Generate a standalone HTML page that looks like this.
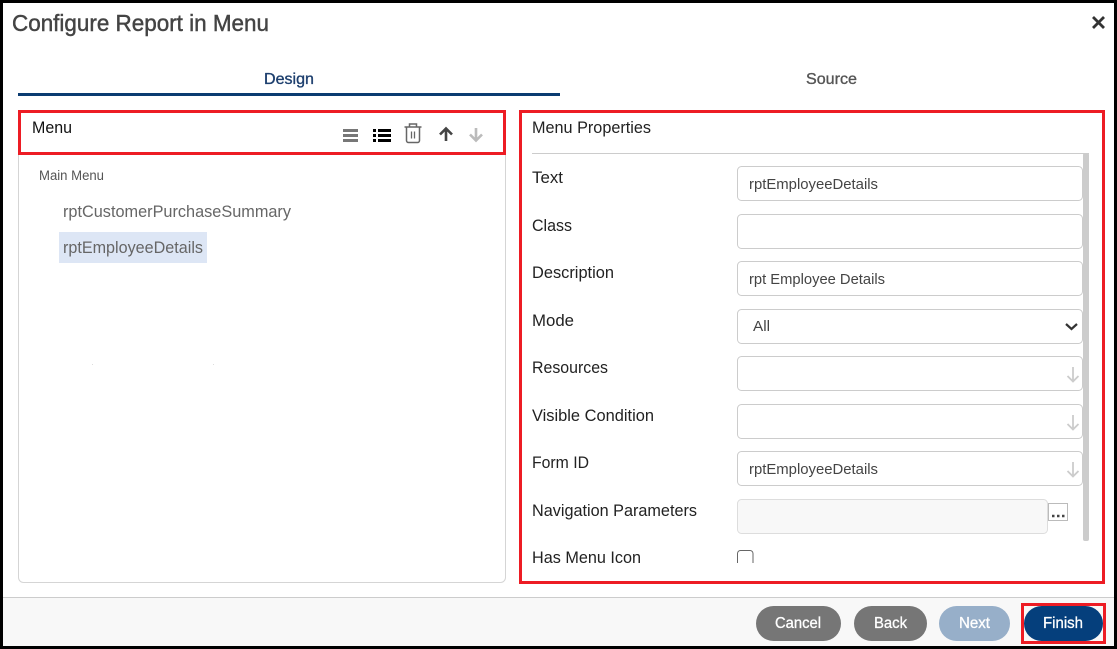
<!DOCTYPE html>
<html>
<head>
<meta charset="utf-8">
<title>Configure Report in Menu</title>
<style>
html,body{margin:0;padding:0;background:#000;width:1117px;height:649px;overflow:hidden}
svg{display:block}
text{font-family:"Liberation Sans",sans-serif;white-space:pre}
.lb{font-size:16.5px;fill:#222}
.val{font-size:15px;fill:#444}
.fld{fill:#fff;stroke:#ccc;stroke-width:1}
.btn{font-size:15.5px;fill:#fff;stroke:#fff;stroke-width:.3}
</style>
</head>
<body>
<svg width="1117" height="649" viewBox="0 0 1117 649" xmlns="http://www.w3.org/2000/svg">
<rect width="1117" height="649" fill="#000"/>
<rect x="3" y="3" width="1111" height="643" fill="#fff"/>

<text x="12" y="31" font-size="23.500" fill="#444" stroke="#444" stroke-width=".45" textLength="257" lengthAdjust="spacingAndGlyphs">Configure Report in Menu</text>
<path d="M1093 17l11 11M1104 17l-11 11" stroke="#333" stroke-width="2.800" fill="none"/>

<text x="264" y="84" font-size="16" fill="#1d3f6e" stroke="#1d3f6e" stroke-width=".35" textLength="50" lengthAdjust="spacingAndGlyphs">Design</text>
<text x="806" y="84" font-size="16" fill="#555" stroke="#555" stroke-width=".35" textLength="51" lengthAdjust="spacingAndGlyphs">Source</text>
<rect x="18" y="93" width="542" height="3" fill="#0b3c71"/>

<!-- left panel -->
<rect x="18.500" y="140" width="487" height="442.500" rx="5" fill="#fff" stroke="#d5d5d5"/>
<rect x="19.500" y="111.500" width="485" height="42" fill="#fff" stroke="#ed1c24" stroke-width="3"/>
<text x="32" y="133" font-size="16.500" fill="#111" textLength="40" lengthAdjust="spacingAndGlyphs">Menu</text>

<path d="M343 130.500h15M343 135.500h15M343 140.500h15" stroke="#777" stroke-width="3" fill="none"/>
<path d="M373 130.500h3M373 135.500h3M373 140.500h3M378 130.500h13M378 135.500h13M378 140.500h13" stroke="#000" stroke-width="3" fill="none"/>
<g fill="none" stroke="#666" stroke-width="1.500">
<path d="M404.500 127h17M409.500 126.500v-2.500h7v2.500"/>
<path d="M406.500 127v13.500a2 2 0 0 0 2 2h9a2 2 0 0 0 2-2V127"/>
<path d="M411.500 131.500v7M414.500 131.500v7" stroke-width="1.300"/>
</g>
<path d="M446 141v-12M440 134.500l6-6 6 6" stroke="#444" stroke-width="2.600" fill="none"/>
<path d="M476 128v12M470 134.500l6 6 6-6" stroke="#bbb" stroke-width="2.600" fill="none"/>

<text x="39" y="180" font-size="13.500" fill="#555" textLength="65" lengthAdjust="spacingAndGlyphs">Main Menu</text>
<text x="63" y="217" font-size="17" fill="#666" textLength="228" lengthAdjust="spacingAndGlyphs">rptCustomerPurchaseSummary</text>
<rect x="59" y="232" width="148" height="31" fill="#dde6f5"/>
<text x="63" y="253" font-size="17" fill="#666" textLength="140" lengthAdjust="spacingAndGlyphs">rptEmployeeDetails</text>
<rect x="92" y="364" width="1" height="1" fill="#ddd"/>
<rect x="213" y="364" width="1" height="1" fill="#ddd"/>

<!-- right panel -->
<rect x="520.500" y="111.500" width="583" height="471" fill="#fff" stroke="#ed1c24" stroke-width="3"/>
<text x="532" y="133" class="lb" textLength="119" lengthAdjust="spacingAndGlyphs">Menu Properties</text>
<rect x="532" y="153" width="557" height="1" fill="#ccc"/>
<rect x="1083" y="153" width="6" height="388" rx="2" fill="#ccc"/>

<text x="532" y="183" class="lb" textLength="31" lengthAdjust="spacingAndGlyphs">Text</text>
<text x="532" y="231" class="lb" textLength="40" lengthAdjust="spacingAndGlyphs">Class</text>
<text x="532" y="278" class="lb" textLength="82" lengthAdjust="spacingAndGlyphs">Description</text>
<text x="532" y="326" class="lb" textLength="42" lengthAdjust="spacingAndGlyphs">Mode</text>
<text x="532" y="373" class="lb" textLength="76" lengthAdjust="spacingAndGlyphs">Resources</text>
<text x="532" y="421" class="lb" textLength="122" lengthAdjust="spacingAndGlyphs">Visible Condition</text>
<text x="532" y="468" class="lb" textLength="57" lengthAdjust="spacingAndGlyphs">Form ID</text>
<text x="532" y="516" class="lb" textLength="165" lengthAdjust="spacingAndGlyphs">Navigation Parameters</text>
<text x="532" y="563" class="lb" textLength="109" lengthAdjust="spacingAndGlyphs">Has Menu Icon</text>

<rect class="fld" x="737.500" y="166.500" width="345" height="34" rx="4"/>
<rect class="fld" x="737.500" y="214.500" width="345" height="34" rx="4"/>
<rect class="fld" x="737.500" y="261.500" width="345" height="34" rx="4"/>
<rect class="fld" x="737.500" y="309.500" width="345" height="34" rx="4"/>
<rect class="fld" x="737.500" y="356.500" width="345" height="34" rx="4"/>
<rect class="fld" x="737.500" y="404.500" width="345" height="34" rx="4"/>
<rect class="fld" x="737.500" y="451.500" width="345" height="34" rx="4"/>
<rect x="737.500" y="499.500" width="310" height="34" rx="4" fill="#f8f8f8" stroke="#ddd"/>

<text x="749" y="189" class="val" textLength="129" lengthAdjust="spacingAndGlyphs">rptEmployeeDetails</text>
<text x="749" y="284" class="val" textLength="136" lengthAdjust="spacingAndGlyphs">rpt Employee Details</text>
<text x="753" y="331" class="val" textLength="17" lengthAdjust="spacingAndGlyphs">All</text>
<text x="749" y="474" class="val" textLength="129" lengthAdjust="spacingAndGlyphs">rptEmployeeDetails</text>

<path d="M1066 324l5.500 5 5.500-5" stroke="#333" stroke-width="2.200" fill="none"/>
<g stroke="#ccc" stroke-width="1.800" fill="none">
<path d="M1073 367v14.500M1067.500 376l5.500 5.500 5.500-5.500"/>
<path d="M1073 415v14.500M1067.500 424l5.500 5.500 5.500-5.500"/>
<path d="M1073 462v14.500M1067.500 471l5.500 5.500 5.500-5.500"/>
</g>

<rect x="1048.500" y="503.500" width="19" height="17" fill="#fff" stroke="#bbb"/>
<path d="M1052 516h2.500M1057 516h2.500M1062 516h2.500" stroke="#444" stroke-width="2.400" fill="none"/>

<path d="M737.500 563v-9.500a3 3 0 0 1 3-3h9.500a3 3 0 0 1 3 3v9.500" fill="none" stroke="#666"/>

<!-- footer -->
<rect x="3" y="597" width="1111" height="49" fill="#f8f8f8"/>
<rect x="3" y="597" width="1111" height="1" fill="#ccc"/>

<rect x="756" y="606" width="85" height="35" rx="17.500" fill="#767676"/>
<text x="775" y="628" class="btn" textLength="46" lengthAdjust="spacingAndGlyphs">Cancel</text>
<rect x="854" y="606" width="73" height="35" rx="17.500" fill="#767676"/>
<text x="874" y="628" class="btn" textLength="33" lengthAdjust="spacingAndGlyphs">Back</text>
<rect x="939" y="606" width="71" height="35" rx="17.500" fill="#97afc9"/>
<text x="959" y="628" class="btn" textLength="31" lengthAdjust="spacingAndGlyphs">Next</text>
<rect x="1022.500" y="604.500" width="82" height="38" fill="none" stroke="#ed1c24" stroke-width="3"/>
<rect x="1024" y="606" width="79" height="35" rx="17.500" fill="#053f7c"/>
<text x="1043" y="628" class="btn" textLength="40" lengthAdjust="spacingAndGlyphs">Finish</text>
</svg>
</body>
</html>
